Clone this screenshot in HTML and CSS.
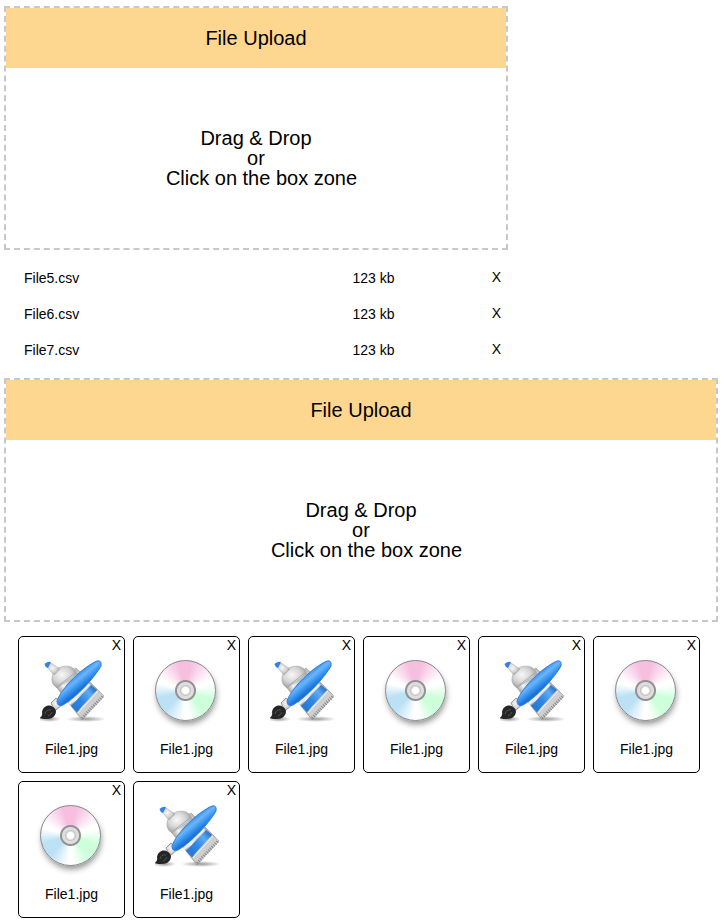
FILE: index.html
```html
<!DOCTYPE html>
<html lang="en">
<head>
<meta charset="utf-8">
<meta name="viewport" content="width=device-width, initial-scale=1">
<title>File Upload</title>
<link rel="stylesheet" href="styles.css">
</head>
<body>
<svg class="sprite" aria-hidden="true">
  <defs>
    <linearGradient id="tube" gradientUnits="userSpaceOnUse" x1="25" y1="42" x2="49" y2="20">
      <stop offset="0" stop-color="#8f8f8f"/><stop offset=".25" stop-color="#f4f4f4"/><stop offset=".5" stop-color="#c4c4c4"/><stop offset=".8" stop-color="#e2e2e2"/><stop offset="1" stop-color="#8c8c8c"/>
    </linearGradient>
    <linearGradient id="band" gradientUnits="userSpaceOnUse" x1="33" y1="50" x2="55" y2="31">
      <stop offset="0" stop-color="#2378d2"/><stop offset=".4" stop-color="#2f86e6"/><stop offset=".75" stop-color="#5caaf6"/><stop offset="1" stop-color="#2975cb"/>
    </linearGradient>
    <linearGradient id="handle" gradientUnits="userSpaceOnUse" x1="33" y1="19" x2="42" y2="30">
      <stop offset="0" stop-color="#3b8de8"/><stop offset=".35" stop-color="#6bb5fa"/><stop offset=".65" stop-color="#3c98f3"/><stop offset="1" stop-color="#1d70d4"/>
    </linearGradient>
    <radialGradient id="shoulder" cx=".4" cy=".4" r=".65">
      <stop offset="0" stop-color="#f8f8f8"/><stop offset=".55" stop-color="#d4d4d4"/><stop offset="1" stop-color="#9a9a9a"/>
    </radialGradient>
    <radialGradient id="shade">
      <stop offset="0" stop-color="#000" stop-opacity=".4"/><stop offset="1" stop-color="#000" stop-opacity="0"/>
    </radialGradient>
    <symbol id="tools" viewBox="0 0 64 64">
      <ellipse cx="9" cy="61" rx="12" ry="3" fill="url(#shade)"/>
      <ellipse cx="46" cy="61" rx="20" ry="3" fill="url(#shade)"/>
      <path d="M14 26 36 10 64 38 42 62Z" fill="url(#tube)" stroke="#999" stroke-width=".6"/>
      <path d="M57 32 64 38 42 61 37 55Z" fill="#cfcfcf"/>
      <path d="M42 60 63 38" stroke="#858585" stroke-width="3" stroke-dasharray="1 1.4"/>
      <path d="M51 27 57 32 37 54 31 48Z" fill="url(#band)"/>
      <path d="M49 26 29 46" stroke="#eee" stroke-width="3"/>
      <path d="M58 33 38 55" stroke="#f3f3f3" stroke-width="1"/>
      <path d="M12 20C13 11 23 6 31 9Q36 11 37 16L17 30Q11 26 12 20Z" fill="url(#shoulder)" stroke="#a5a5a5" stroke-width=".6"/>
      <path d="M17 29 36 14" stroke="#aaa" stroke-width="1"/>
      <path d="M7 9 11 5 20 11 14 17Z" fill="url(#shoulder)" stroke="#aaa" stroke-width=".6"/>
      <path d="M4.500 6Q8 3 11 4L8 10Q5 9 4.500 6Z" fill="#347fe8"/>
      <path d="M11 45 16 40 23 46 15 53Z" fill="url(#shoulder)" stroke="#777" stroke-width=".7"/>
      <path d="M17 43C22 29 43 9 57 3Q62 2 61 8C55 19 37 39 23 47Q17 49 17 43Z" fill="url(#handle)" stroke="#2f7fdc" stroke-width="1" stroke-linejoin="round"/>
      <path d="M-.5 60Q3 58 2 54C3 48 9 46 13 49C18 52 16 58 12 60Q7 62-.5 60Z" fill="#252525"/>
      <path d="M5 56Q6 51 11 52M8 58Q12 56 12 54" fill="none" stroke="#555" stroke-width=".9"/>
    </symbol>
  </defs>
</svg>

<main>
  <section class="uploader compact">
    <div class="box">
      <h2 class="title">File Upload</h2>
      <label class="zone">Drag &amp; Drop<br>or<br><span class="hint">Click on the box zone</span><input class="picker" type="file" multiple></label>
    </div>
    <ul class="files">
      <li class="file"><span class="name">File5.csv</span><span class="size">123 kb</span><button class="remove" type="button" aria-label="Remove File5.csv">X</button></li>
      <li class="file"><span class="name">File6.csv</span><span class="size">123 kb</span><button class="remove" type="button" aria-label="Remove File6.csv">X</button></li>
      <li class="file"><span class="name">File7.csv</span><span class="size">123 kb</span><button class="remove" type="button" aria-label="Remove File7.csv">X</button></li>
    </ul>
  </section>

  <section class="uploader">
    <div class="box">
      <h2 class="title">File Upload</h2>
      <label class="zone">Drag &amp; Drop<br>or<br><span class="hint">Click on the box zone</span><input class="picker" type="file" multiple></label>
    </div>
    <ul class="cards">
      <li class="card"><button class="remove" type="button" aria-label="Remove">X</button><svg class="thumb" aria-hidden="true"><use href="#tools"/></svg><span>File1.jpg</span></li>
      <li class="card"><button class="remove" type="button" aria-label="Remove">X</button><span class="thumb disc"></span><span>File1.jpg</span></li>
      <li class="card"><button class="remove" type="button" aria-label="Remove">X</button><svg class="thumb" aria-hidden="true"><use href="#tools"/></svg><span>File1.jpg</span></li>
      <li class="card"><button class="remove" type="button" aria-label="Remove">X</button><span class="thumb disc"></span><span>File1.jpg</span></li>
      <li class="card"><button class="remove" type="button" aria-label="Remove">X</button><svg class="thumb" aria-hidden="true"><use href="#tools"/></svg><span>File1.jpg</span></li>
      <li class="card"><button class="remove" type="button" aria-label="Remove">X</button><span class="thumb disc"></span><span>File1.jpg</span></li>
      <li class="card"><button class="remove" type="button" aria-label="Remove">X</button><span class="thumb disc"></span><span>File1.jpg</span></li>
      <li class="card"><button class="remove" type="button" aria-label="Remove">X</button><svg class="thumb" aria-hidden="true"><use href="#tools"/></svg><span>File1.jpg</span></li>
    </ul>
  </section>
</main>
</body>
</html>
```

FILE: styles.css
```css
* {
  box-sizing: border-box;
}

body {
  margin: 0;
  padding: 6px 6px 3px 4px;
  background: #fff;
  color: #000;
  font: 14px/16px "Liberation Sans", Arial, sans-serif;
}

.sprite {
  position: absolute;
  width: 0;
  height: 0;
}

.compact {
  max-width: 504px;
}

.box {
  border: 2px dashed #c8c8cc;
  font-size: 20px;
  line-height: 20px;
  text-align: center;
}

.title {
  margin: 0;
  padding: 20px;
  background: #fdd78f;
  font-size: 20px;
  font-weight: normal;
}

.zone {
  position: relative;
  display: block;
  padding: 60px 20px;
  cursor: pointer;
}

.hint {
  padding-left: 11px;
}

.picker {
  position: absolute;
  inset: 0;
  width: 100%;
  height: 100%;
  opacity: 0;
  cursor: pointer;
}

.files,
.cards {
  margin: 0;
  padding: 0;
  list-style: none;
}

.files {
  padding: 10px 7px 10px 20px;
}

.file {
  display: grid;
  grid-template-columns: 328fr 139fr auto;
  align-items: center;
  height: 36px;
}

.remove {
  padding: 0;
  border: 0;
  background: none;
  color: inherit;
  font: inherit;
  cursor: pointer;
}

.file .remove {
  padding-bottom: 2px;
}

.cards {
  display: flex;
  flex-wrap: wrap;
  gap: 8px;
  padding: 14px 14px 0;
}

.card {
  display: flex;
  flex-direction: column;
  align-items: center;
  width: 107px;
  height: 137px;
  border: 1px solid #000;
  border-radius: 5px;
}

.card .remove {
  align-self: flex-end;
  margin-right: 3px;
}

.thumb {
  width: 64px;
  height: 64px;
  margin: 5px 0 19px;
  overflow: visible;
}

.disc {
  width: 61px;
  height: 61px;
  margin: 7px 2px 20px 0;
  border: 1px solid #85858c;
  border-radius: 50%;
  background:
    radial-gradient(circle, #fff 0 3px, #c4c4c4 5px, #dedede 6px 8px, #929292 9px 10px, transparent 11px),
    conic-gradient(#f6bfe0 0deg 12deg, #fff 66deg 76deg, #ccffda 110deg 140deg, #fff 174deg 184deg, #bce1f5 225deg 255deg, #fff 285deg 295deg, #f6bfe0 345deg);
  box-shadow: 1px 4px 6px -1px rgb(0 0 0 / 45%);
}
```
